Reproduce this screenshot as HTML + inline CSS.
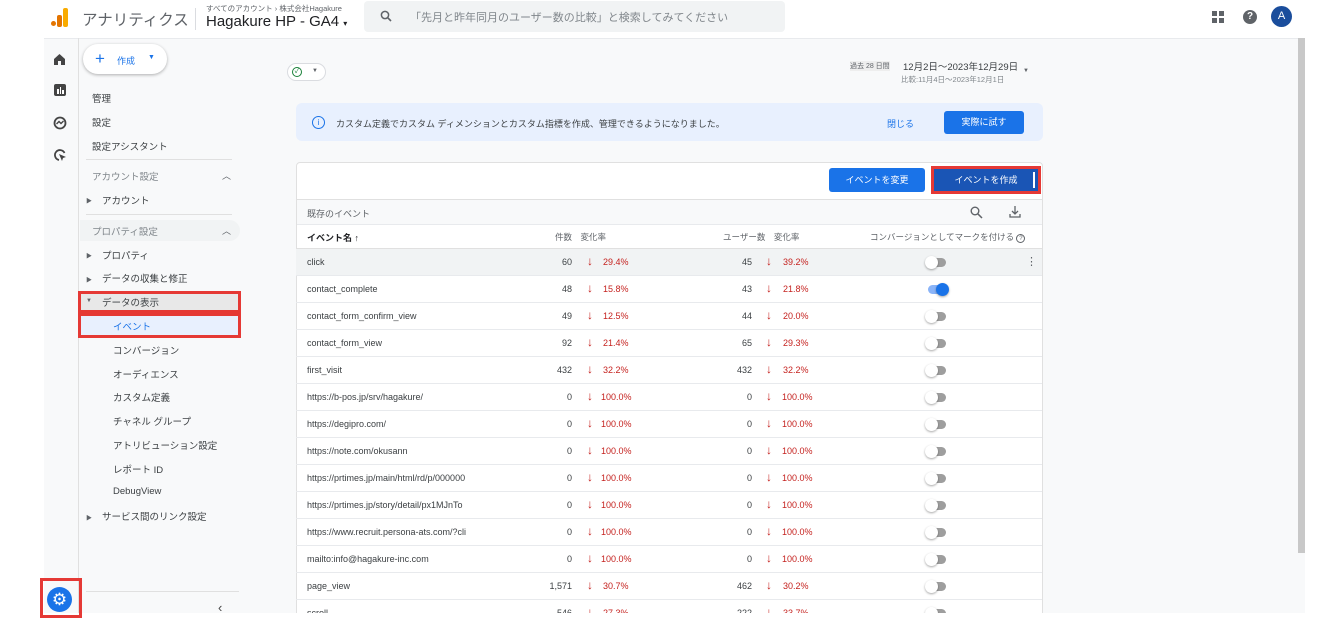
<!DOCTYPE html>
<html><head><meta charset="utf-8"><style>
*{margin:0;padding:0;box-sizing:border-box}
body{width:1342px;height:632px;overflow:hidden;background:#fff;font-family:"Liberation Sans","Noto Sans CJK JP",sans-serif;color:#202124;position:relative}
.a{position:absolute;white-space:nowrap}
.row{position:absolute;left:296px;width:746px;height:27px;border-bottom:1px solid #e8eaed;font-size:9px;color:#3c4043}
.row span{position:absolute;top:8px}
.n{text-align:right;width:40px}
.arr{color:#c5221f;font-size:12px;font-weight:bold;top:5px!important}
.pc{color:#c5221f}
.tg{position:absolute;top:9px;left:632px;width:18px;height:9px;border-radius:5px;background:#9e9e9e}
.tg:before{content:"";position:absolute;left:-3px;top:-2px;width:13px;height:13px;border-radius:50%;background:#fff;box-shadow:0 1px 2px rgba(0,0,0,.35)}
.tg.on{background:#8ab4f8}.tg.on:before{left:8px;background:#1a73e8}
.sb{position:absolute;font-size:9.5px;color:#3c4043;white-space:nowrap}
.tri{position:absolute;font-size:6px;color:#5f6368}
</style></head><body>
<div class="a" style="left:50px;top:8px;width:20px;height:20px">
<div class="a" style="left:1px;top:13px;width:5px;height:5px;border-radius:50%;background:#e37400"></div>
<div class="a" style="left:7px;top:7px;width:5px;height:12px;border-radius:2px;background:#e37400"></div>
<div class="a" style="left:13px;top:0;width:5px;height:19px;border-radius:2px;background:#f9ab00"></div></div>
<div class="a" style="left:82px;top:8px;font-size:15.5px;color:#5f6368">アナリティクス</div>
<div class="a" style="left:195px;top:8px;width:1px;height:22px;background:#dadce0"></div>
<div class="a" style="left:206px;top:3px;font-size:7.5px;color:#5f6368">すべてのアカウント › 株式会社Hagakure</div>
<div class="a" style="left:206px;top:13px;font-size:15px;color:#202124">Hagakure HP - GA4 <span style="font-size:8px">▾</span></div>
<div class="a" style="left:364px;top:1px;width:421px;height:31px;background:#f1f3f4;border-radius:4px"></div>
<svg class="a" style="left:380px;top:10px" width="12" height="12" viewBox="0 0 12 12"><circle cx="5" cy="5" r="3.6" fill="none" stroke="#5f6368" stroke-width="1.5"/><path d="M7.6 7.6L11 11" stroke="#5f6368" stroke-width="1.6"/></svg>
<div class="a" style="left:410px;top:9px;font-size:11px;color:#80868b">「先月と昨年同月のユーザー数の比較」と検索してみてください</div>
<div class="a" style="left:1212px;top:11px;width:12px;height:12px;background:linear-gradient(#5f6368,#5f6368) 0 0/5px 5px no-repeat,linear-gradient(#5f6368,#5f6368) 7px 0/5px 5px no-repeat,linear-gradient(#5f6368,#5f6368) 0 7px/5px 5px no-repeat,linear-gradient(#5f6368,#5f6368) 7px 7px/5px 5px no-repeat"></div>
<div class="a" style="left:1243px;top:10px;width:14px;height:14px;border-radius:50%;background:#5f6368;color:#fff;font-size:10px;font-weight:bold;text-align:center;line-height:14px">?</div>
<div class="a" style="left:1271px;top:6px;width:21px;height:21px;border-radius:50%;background:#1a4d9c;color:#fff;font-size:11px;text-align:center;line-height:21px">A</div>
<div class="a" style="left:44px;top:38px;width:1261px;height:575px;background:#f8f9fa;border-top:1px solid #e8eaed"></div>
<div class="a" style="left:1298px;top:38px;width:7px;height:515px;background:#c8c8c8"></div>
<div class="a" style="left:78px;top:38px;width:1px;height:575px;background:#e0e0e0"></div>
<svg class="a" style="left:53px;top:53px" width="13" height="13" viewBox="0 0 13 13"><path d="M1 6L6.5 1 12 6V12H8V8H5v4H1z" fill="#444"/></svg>
<div class="a" style="left:54px;top:84px;width:12px;height:12px;background:#444;border-radius:2px"><div class="a" style="left:3px;top:5px;width:1.5px;height:5px;background:#fff"></div><div class="a" style="left:5.5px;top:3px;width:1.5px;height:7px;background:#fff"></div><div class="a" style="left:8px;top:6px;width:1.5px;height:4px;background:#fff"></div></div>
<svg class="a" style="left:53px;top:116px" width="14" height="14" viewBox="0 0 14 14"><circle cx="7" cy="7" r="5.5" fill="none" stroke="#444" stroke-width="1.8"/><path d="M3.5 8L6 5.5 8 7.5 10.5 5" fill="none" stroke="#444" stroke-width="1.4"/></svg>
<svg class="a" style="left:53px;top:148px" width="14" height="14" viewBox="0 0 14 14"><path d="M11.5 5A5 5 0 1 0 6 12" fill="none" stroke="#444" stroke-width="1.8"/><path d="M6 6l7 3-3 1-1 3z" fill="#444"/></svg>
<div class="a" style="left:47px;top:587px;width:25px;height:25px;border-radius:50%;background:#1a73e8;color:#fff;font-size:17px;text-align:center;line-height:25px">⚙</div>
<div class="a" style="left:83px;top:44px;width:84px;height:30px;background:#fff;border-radius:15px;box-shadow:0 1px 3px rgba(0,0,0,.3)"></div>
<div class="a" style="left:95px;top:49px;font-size:17px;color:#1a73e8">+</div>
<div class="a" style="left:117px;top:54px;font-size:9px;color:#1a73e8">作成</div>
<div class="a" style="left:148px;top:54px;font-size:7px;color:#1a73e8">▼</div>
<div class="sb" style="left:92px;top:91px">管理</div>
<div class="sb" style="left:92px;top:115px">設定</div>
<div class="sb" style="left:92px;top:139px">設定アシスタント</div>
<div class="a" style="left:86px;top:159px;width:146px;height:1px;background:#e0e0e0"></div>
<div class="sb" style="left:92px;top:169px;color:#80868b">アカウント設定</div>
<div class="a" style="left:222px;top:169px;font-size:9px;color:#5f6368">︿</div>
<div class="tri" style="left:86px;top:196px">▶</div><div class="sb" style="left:102px;top:193px">アカウント</div>
<div class="a" style="left:86px;top:214px;width:146px;height:1px;background:#e0e0e0"></div>
<div class="a" style="left:80px;top:220px;width:160px;height:21px;background:#f1f3f4;border-radius:0 11px 11px 0"></div>
<div class="sb" style="left:92px;top:224px;color:#80868b">プロパティ設定</div>
<div class="a" style="left:222px;top:224px;font-size:9px;color:#5f6368">︿</div>
<div class="tri" style="left:86px;top:251px">▶</div><div class="sb" style="left:102px;top:248px">プロパティ</div>
<div class="tri" style="left:86px;top:275px">▶</div><div class="sb" style="left:102px;top:271px">データの収集と修正</div>
<div class="a" style="left:78px;top:291px;width:163px;height:22px;background:#e8e8e8;border:3px solid #e53935"></div>
<div class="tri" style="left:86px;top:298px">▼</div><div class="sb" style="left:102px;top:295px">データの表示</div>
<div class="a" style="left:78px;top:313px;width:163px;height:25px;background:#e8f0fe;border:3px solid #e53935"></div>
<div class="sb" style="left:113px;top:319px;color:#1a73e8">イベント</div>
<div class="sb" style="left:113px;top:343px">コンバージョン</div>
<div class="sb" style="left:113px;top:367px">オーディエンス</div>
<div class="sb" style="left:113px;top:390px">カスタム定義</div>
<div class="sb" style="left:113px;top:414px">チャネル グループ</div>
<div class="sb" style="left:113px;top:438px">アトリビューション設定</div>
<div class="sb" style="left:113px;top:462px">レポート ID</div>
<div class="sb" style="left:113px;top:486px">DebugView</div>
<div class="tri" style="left:86px;top:513px">▶</div><div class="sb" style="left:102px;top:509px">サービス間のリンク設定</div>
<div class="a" style="left:86px;top:591px;width:153px;height:1px;background:#e0e0e0"></div>
<div class="a" style="left:218px;top:600px;font-size:13px;color:#444">‹</div>
<div class="a" style="left:287px;top:63px;width:39px;height:18px;border:1px solid #dadce0;border-radius:9px;background:#fff"></div>
<div class="a" style="left:292px;top:67px;width:10px;height:10px;border:1.3px solid #188038;border-radius:50%;font-size:7px;color:#188038;line-height:8px;text-align:center">✓</div>
<div class="a" style="left:312px;top:68px;font-size:6px;color:#5f6368">▼</div>
<div class="a" style="left:850px;top:61px;font-size:7px;color:#5f6368;background:#eee">過去 28 日間</div>
<div class="a" style="left:903px;top:59px;font-size:9.5px;color:#3c4043">12月2日～2023年12月29日</div>
<div class="a" style="left:901px;top:74px;font-size:7.5px;color:#80868b">比較:11月4日～2023年12月1日</div>
<div class="a" style="left:1023px;top:68px;font-size:6px;color:#5f6368">▼</div>
<div class="a" style="left:296px;top:103px;width:747px;height:38px;background:#e8f0fe;border-radius:6px"></div>
<div class="a" style="left:312px;top:116px;width:13px;height:13px;border:1.3px solid #1a73e8;border-radius:50%;font-size:8px;color:#1a73e8;text-align:center;line-height:11px">i</div>
<div class="a" style="left:336px;top:117px;font-size:9px;color:#3c4043">カスタム定義でカスタム ディメンションとカスタム指標を作成、管理できるようになりました。</div>
<div class="a" style="left:887px;top:117px;font-size:9px;color:#1a73e8">閉じる</div>
<div class="a" style="left:944px;top:111px;width:80px;height:23px;background:#1a73e8;border-radius:3px;color:#fff;font-size:9px;text-align:center;line-height:23px">実際に試す</div>
<div class="a" style="left:296px;top:162px;width:747px;height:460px;background:#fff;border:1px solid #e0e0e0;border-radius:4px 4px 0 0"></div>
<div class="a" style="left:829px;top:168px;width:96px;height:24px;background:#1a73e8;border-radius:3px;color:#fff;font-size:9px;text-align:center;line-height:24px">イベントを変更</div>
<div class="a" style="left:931px;top:166px;width:110px;height:28px;border:3px solid #e53935;background:#1a55b5;color:#fff;font-size:9px;text-align:center;line-height:22px">イベントを作成<div class="a" style="right:3px;top:3px;width:2px;height:16px;background:#fff"></div></div>
<div class="a" style="left:297px;top:199px;width:745px;height:26px;background:#f8f9fa;border-top:1px solid #e0e0e0;border-bottom:1px solid #e8eaed"></div>
<div class="a" style="left:307px;top:207px;font-size:9px;color:#5f6368">既存のイベント</div>
<svg class="a" style="left:970px;top:206px" width="13" height="13" viewBox="0 0 13 13"><circle cx="5" cy="5" r="3.8" fill="none" stroke="#5f6368" stroke-width="1.4"/><path d="M7.8 7.8L12 12" stroke="#5f6368" stroke-width="1.5"/></svg>
<svg class="a" style="left:1008px;top:205px" width="14" height="14" viewBox="0 0 14 14"><path d="M7 1v8M4 6l3 3 3-3M2 9v3h10V9" fill="none" stroke="#5f6368" stroke-width="1.3"/></svg>
<div class="a" style="left:307px;top:231px;font-size:9px;font-weight:bold">イベント名 ↑</div>
<div class="a" style="left:555px;top:231px;font-size:8.5px;color:#5f6368">件数　変化率</div>
<div class="a" style="left:723px;top:231px;font-size:8.5px;color:#5f6368">ユーザー数　変化率</div>
<div class="a" style="left:870px;top:231px;font-size:8.5px;color:#5f6368">コンバージョンとしてマークを付ける <span style="display:inline-block;width:9px;height:9px;border:1px solid #5f6368;border-radius:50%;font-size:6px;text-align:center;line-height:8px">?</span></div>
<div class="a" style="left:297px;top:248px;width:745px;height:1px;background:#e0e0e0"></div>
<div class="row" style="top:249px;background:#f1f3f4"><span style="left:11px">click</span><span class="n" style="left:236px">60</span><span class="arr" style="left:291px">↓</span><span class="pc" style="left:307px">29.4%</span><span class="n" style="left:416px">45</span><span class="arr" style="left:470px">↓</span><span class="pc" style="left:487px">39.2%</span><div class="tg"></div><span style="left:730px;top:6px;font-size:11px;color:#5f6368">⋮</span></div>
<div class="row" style="top:276px"><span style="left:11px">contact_complete</span><span class="n" style="left:236px">48</span><span class="arr" style="left:291px">↓</span><span class="pc" style="left:307px">15.8%</span><span class="n" style="left:416px">43</span><span class="arr" style="left:470px">↓</span><span class="pc" style="left:487px">21.8%</span><div class="tg on"></div></div>
<div class="row" style="top:303px"><span style="left:11px">contact_form_confirm_view</span><span class="n" style="left:236px">49</span><span class="arr" style="left:291px">↓</span><span class="pc" style="left:307px">12.5%</span><span class="n" style="left:416px">44</span><span class="arr" style="left:470px">↓</span><span class="pc" style="left:487px">20.0%</span><div class="tg"></div></div>
<div class="row" style="top:330px"><span style="left:11px">contact_form_view</span><span class="n" style="left:236px">92</span><span class="arr" style="left:291px">↓</span><span class="pc" style="left:307px">21.4%</span><span class="n" style="left:416px">65</span><span class="arr" style="left:470px">↓</span><span class="pc" style="left:487px">29.3%</span><div class="tg"></div></div>
<div class="row" style="top:357px"><span style="left:11px">first_visit</span><span class="n" style="left:236px">432</span><span class="arr" style="left:291px">↓</span><span class="pc" style="left:307px">32.2%</span><span class="n" style="left:416px">432</span><span class="arr" style="left:470px">↓</span><span class="pc" style="left:487px">32.2%</span><div class="tg"></div></div>
<div class="row" style="top:384px"><span style="left:11px">https://b-pos.jp/srv/hagakure/</span><span class="n" style="left:236px">0</span><span class="arr" style="left:291px">↓</span><span class="pc" style="left:305px">100.0%</span><span class="n" style="left:416px">0</span><span class="arr" style="left:470px">↓</span><span class="pc" style="left:486px">100.0%</span><div class="tg"></div></div>
<div class="row" style="top:411px"><span style="left:11px">https://degipro.com/</span><span class="n" style="left:236px">0</span><span class="arr" style="left:291px">↓</span><span class="pc" style="left:305px">100.0%</span><span class="n" style="left:416px">0</span><span class="arr" style="left:470px">↓</span><span class="pc" style="left:486px">100.0%</span><div class="tg"></div></div>
<div class="row" style="top:438px"><span style="left:11px">https://note.com/okusann</span><span class="n" style="left:236px">0</span><span class="arr" style="left:291px">↓</span><span class="pc" style="left:305px">100.0%</span><span class="n" style="left:416px">0</span><span class="arr" style="left:470px">↓</span><span class="pc" style="left:486px">100.0%</span><div class="tg"></div></div>
<div class="row" style="top:465px"><span style="left:11px">https://prtimes.jp/main/html/rd/p/000000</span><span class="n" style="left:236px">0</span><span class="arr" style="left:291px">↓</span><span class="pc" style="left:305px">100.0%</span><span class="n" style="left:416px">0</span><span class="arr" style="left:470px">↓</span><span class="pc" style="left:486px">100.0%</span><div class="tg"></div></div>
<div class="row" style="top:492px"><span style="left:11px">https://prtimes.jp/story/detail/px1MJnTo</span><span class="n" style="left:236px">0</span><span class="arr" style="left:291px">↓</span><span class="pc" style="left:305px">100.0%</span><span class="n" style="left:416px">0</span><span class="arr" style="left:470px">↓</span><span class="pc" style="left:486px">100.0%</span><div class="tg"></div></div>
<div class="row" style="top:519px"><span style="left:11px">https://www.recruit.persona-ats.com/?cli</span><span class="n" style="left:236px">0</span><span class="arr" style="left:291px">↓</span><span class="pc" style="left:305px">100.0%</span><span class="n" style="left:416px">0</span><span class="arr" style="left:470px">↓</span><span class="pc" style="left:486px">100.0%</span><div class="tg"></div></div>
<div class="row" style="top:546px"><span style="left:11px">mailto:info@hagakure-inc.com</span><span class="n" style="left:236px">0</span><span class="arr" style="left:291px">↓</span><span class="pc" style="left:305px">100.0%</span><span class="n" style="left:416px">0</span><span class="arr" style="left:470px">↓</span><span class="pc" style="left:486px">100.0%</span><div class="tg"></div></div>
<div class="row" style="top:573px"><span style="left:11px">page_view</span><span class="n" style="left:236px">1,571</span><span class="arr" style="left:291px">↓</span><span class="pc" style="left:307px">30.7%</span><span class="n" style="left:416px">462</span><span class="arr" style="left:470px">↓</span><span class="pc" style="left:487px">30.2%</span><div class="tg"></div></div>
<div class="row" style="top:600px"><span style="left:11px">scroll</span><span class="n" style="left:236px">546</span><span class="arr" style="left:291px">↓</span><span class="pc" style="left:307px">27.3%</span><span class="n" style="left:416px">222</span><span class="arr" style="left:470px">↓</span><span class="pc" style="left:487px">33.7%</span><div class="tg"></div></div>
<div class="a" style="left:0;top:613px;width:1342px;height:19px;background:#fff"></div>
<div class="a" style="left:40px;top:578px;width:42px;height:40px;border:3px solid #e53935"></div>
</body></html>
